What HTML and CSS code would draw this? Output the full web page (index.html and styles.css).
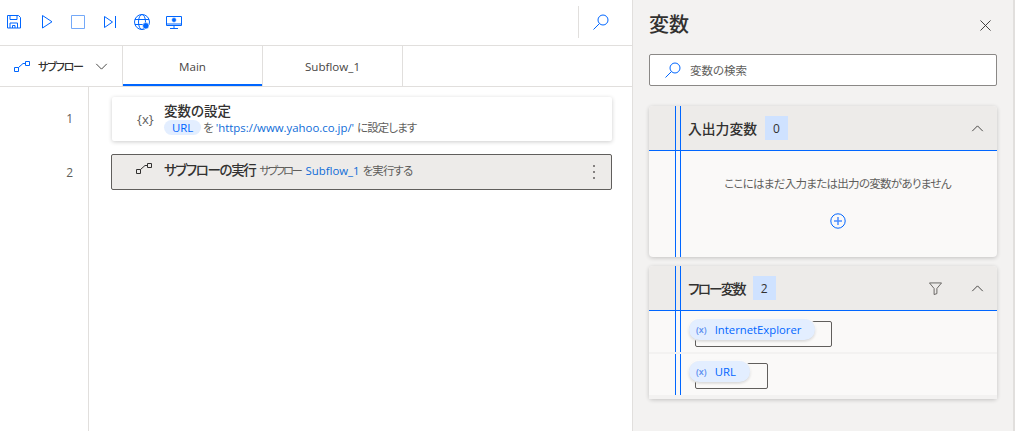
FILE: index.html
```html
<!DOCTYPE html>
<html lang="ja">
<head>
<meta charset="utf-8">
<title>変数</title>
<link rel="stylesheet" href="styles.css">
</head>
<body>
<div class="app">
  <main class="editor">
    <div class="toolbar">
      <div class="tools">
        <svg class="tool" viewBox="0 0 16 16"><path d="M.5 1.500h11l2 2v10.500H.5zM3 1.500v4h7v-4M3 14V9h7.500v5M5.500 14v-2.500h2.500V14"/></svg>
        <svg class="tool" viewBox="0 0 16 16"><path d="M3.500 1.500V14l9.500-6.250z"/></svg>
        <svg class="tool light" viewBox="0 0 16 16"><path d="M.5 1.500h13v13H.5z"/></svg>
        <svg class="tool" viewBox="0 0 16 16"><path d="M1.500 2.500v11l8-5.500zM12.500 2v12"/></svg>
        <svg class="tool globe" viewBox="0 0 16 16"><circle cx="8" cy="8" r="7.500"/><ellipse cx="8" cy="8" rx="3.500" ry="7.500"/><path d="M1 5.500h14M1 10.500h14"/><circle class="dot" cx="11.800" cy="11.800" r="3.200"/></svg>
        <svg class="tool" viewBox="0 0 16 16"><path d="M.5 2.500h15v9H.5zM8 11.500v3M4 14.500h8M.5 10h15"/><circle class="dot" cx="8" cy="6" r="2.400"/></svg>
      </div>
      <div class="toolbar-search">
        <svg class="tool" viewBox="0 0 16 16"><circle cx="10" cy="6" r="5"/><path d="M6.500 9.500L.5 15.500"/></svg>
      </div>
    </div>
    <div class="tabs">
      <div class="flow-picker">
        <svg class="flow-icon blue" viewBox="0 0 16 11"><path d="M.5 6.500h4v4h-4zM11.500.5h4v4h-4zM4.500 6.500l4.500-4h2.500"/></svg>
        <span class="flow-label">サブフロー</span>
        <svg class="chevron" viewBox="0 0 14 8"><path d="M1 1l6 6 6-6"/></svg>
      </div>
      <div class="tab active">Main</div>
      <div class="tab">Subflow_1</div>
    </div>
    <div class="canvas">
      <div class="gutter"><span class="num first">1</span><span class="num">2</span></div>
      <div class="steps">
        <div class="step">
          <span class="step-icon curly">{x}</span>
          <div class="step-body">
            <div class="step-title">変数の設定</div>
            <div class="step-desc"><span class="pill">URL</span> を <span class="link">'https://www.yahoo.co.jp/'</span> <span class="tight">に設定します</span></div>
          </div>
        </div>
        <div class="step selected">
          <svg class="flow-icon step-icon" viewBox="0 0 16 11"><path d="M.5 6.500h4v4h-4zM11.500.5h4v4h-4zM4.500 6.500l4.500-4h2.500"/></svg>
          <div class="step-line"><span class="step-title narrow">サブフローの実行</span> <span class="step-desc"><span class="kata">サブフロー</span> <span class="link">Subflow_1</span> <span class="tight">を実行する</span></span></div>
          <svg class="kebab" viewBox="0 0 4 16"><circle cx="2" cy="2" r="1"/><circle cx="2" cy="8" r="1"/><circle cx="2" cy="14" r="1"/></svg>
        </div>
      </div>
    </div>
  </main>
  <aside class="panel">
    <div class="panel-head">
      <h1>変数</h1>
      <svg class="close" viewBox="0 0 12 12"><path d="M.5.5l11 11M11.500.5l-11 11"/></svg>
    </div>
    <div class="search">
      <svg class="tool" viewBox="0 0 16 16"><circle cx="10" cy="6" r="5"/><path d="M6.500 9.500L.5 15.500"/></svg>
      <span>変数の検索</span>
    </div>
    <section class="group">
      <div class="group-head">
        <span class="group-title">入出力変数</span><span class="count">0</span>
        <svg class="chevron up" viewBox="0 0 14 8"><path d="M1 7l6-6 6 6"/></svg>
      </div>
      <div class="empty">
        <p>ここにはまだ入力または出力の変数がありません</p>
        <svg class="plus" viewBox="0 0 16 16"><circle cx="8" cy="8" r="7.200"/><path class="plus-mark" d="M8 4v8M4 8h8"/></svg>
      </div>
    </section>
    <section class="group">
      <div class="group-head">
        <span class="group-title narrow">フロー変数</span><span class="count">2</span>
        <svg class="filter" viewBox="0 0 14 14"><path d="M.5 1h13L8.500 7v5.500l-3 1V7z"/></svg>
        <svg class="chevron up" viewBox="0 0 14 8"><path d="M1 7l6-6 6 6"/></svg>
      </div>
      <div class="var-row">
        <div class="var-box ie"></div>
        <div class="var-chip"><span class="x">(x)</span>InternetExplorer</div>
      </div>
      <div class="var-row">
        <div class="var-box url"></div>
        <div class="var-chip"><span class="x">(x)</span>URL</div>
      </div>
    </section>
  </aside>
</div>
</body>
</html>
```
FILE: styles.css
```css
* { box-sizing: border-box; }
html, body { margin: 0; height: 100%; }
body {
  font-family: "Open Sans", "Noto Sans CJK JP", sans-serif;
  font-feature-settings: "palt";
  color: #323130;
  background: #fff;
  overflow: hidden;
}
.app { display: flex; width: 1015px; height: 431px; }
.editor { width: 632px; display: flex; flex-direction: column; background: #fff; }
svg { display: block; fill: none; stroke: #0066ff; stroke-width: 1; }
.toolbar { height: 46px; flex: none; display: flex; align-items: center; justify-content: space-between; border-bottom: 1px solid #e1dfdd; padding-bottom: 1px; }
.tools { display: flex; gap: 16px; padding-left: 7px; }
.tool { width: 16px; height: 16px; flex: none; }
.tool.light { stroke: #74a9f8; }
.tool.globe { margin-left: -1px; }
.dot { fill: #0066ff; stroke: #fff; stroke-width: .6; }
.toolbar-search { height: 32px; width: 54px; border-left: 1px solid #e1dfdd; display: flex; align-items: center; padding-left: 14px; margin-top: -1px; }
.tabs { height: 41px; flex: none; display: flex; border-bottom: 1px solid #e1dfdd; }
.flow-picker { width: 123px; display: flex; align-items: center; padding-left: 14px; border-right: 1px solid #e1dfdd; }
.flow-icon { width: 16px; height: 11px; flex: none; stroke: #323130; }
.flow-icon.blue { stroke: #0066ff; }
.flow-label { font-size: 11px; font-weight: 500; margin-left: 8px; width: 45px; white-space: nowrap; letter-spacing: -1.200px; }
.chevron { width: 13px; height: 7px; stroke: #323130; margin-left: 12px; flex: none; }
.tab { width: 140px; display: flex; align-items: center; justify-content: center; font-size: 11.600px; color: #484644; border-right: 1px solid #e1dfdd; }
.tab.active { box-shadow: inset 0 -2px 0 #0066ff; }
.canvas { flex: 1; display: flex; min-height: 0; }
.gutter { width: 89px; flex: none; border-right: 1px solid #e1dfdd; display: flex; flex-direction: column; align-items: flex-end; padding-right: 15px; padding-top: 23px; font-size: 12px; color: #605e5c; }
.num { height: 18px; line-height: 18px; }
.num.first { margin-bottom: 36px; }
.steps { width: 501px; margin-left: 22px; padding-top: 10px; display: flex; flex-direction: column; gap: 13px; }
.step { margin-left: 1px; height: 44px; background: #fff; border-radius: 2px; box-shadow: 0 1px 4px rgba(0,0,0,.2); display: flex; align-items: center; padding-left: 24px; }
.step-icon { width: 16px; flex: none; margin-right: 12px; }
.curly { font-size: 13px; color: #605e5c; white-space: nowrap; margin-left: 1px; margin-right: 9px; width: 18px; }
.step-body { display: flex; flex-direction: column; margin-top: -1px; }
.step-title { font-size: 13.500px; font-weight: 500; line-height: 17px; color: #323130; white-space: nowrap; }
.step-title.narrow { letter-spacing: -1.350px; }
.step-desc { font-size: 11.400px; color: #605e5c; line-height: 15px; white-space: nowrap; }
.step .link { color: #0f6cd8; margin-left: -1px; }
.tight { letter-spacing: -.800px; }
.kata { letter-spacing: -2.300px; margin-right: 3px; }
.pill { display: inline-block; background: #e3eeff; color: #0066ff; border-radius: 8px; padding: 0 8px; font-size: 11.400px; margin-right: -1px; }
.step.selected { margin-left: 0; height: 36px; background: #edebe9; border: 1px solid #605e5c; box-shadow: none; padding-left: 24px; padding-right: 15px; }
.step.selected .flow-icon { margin-top: -7px; }
.step-line { flex: 1; display: flex; align-items: center; gap: 4px; margin-top: -3px; }
.kebab { width: 4px; height: 16px; fill: #605e5c; stroke: none; flex: none; }
.panel { width: 383px; background: #f3f2f1; border-left: 1px solid #e1dfdd; border-right: 2px solid #e1dfdd; padding: 0 16px; position: relative; }
.panel-head { height: 54px; display: flex; align-items: flex-start; justify-content: space-between; padding-top: 12px; }
h1 { margin: 0; font-size: 20px; font-weight: 500; line-height: 26px; color: #323130; }
.close { width: 11px; height: 11px; stroke: #323130; margin: 8px 6px 0 0; }
.search { height: 32px; background: #fff; border: 1px solid #8a8886; border-radius: 2px; display: flex; align-items: center; padding-left: 15px; gap: 9px; font-size: 11.500px; color: #605e5c; margin-bottom: 20px; }
.group { position: relative; background: #faf9f8; border-radius: 4px; box-shadow: 0 1px 4px rgba(0,0,0,.2); margin-bottom: 9px; }
.group::before { content: ""; position: absolute; top: 0; bottom: 0; left: 26px; width: 4px; border-left: 1px solid #0066ff; border-right: 1px solid #0066ff; }
.group-head { height: 45px; background: #edebe9; border-bottom: 1px solid #0066ff; border-radius: 4px 4px 0 0; display: flex; align-items: center; padding: 0 13px 0 39px; gap: 8px; }
.group-title { font-size: 13.800px; font-weight: 500; white-space: nowrap; }
.group-title.narrow { letter-spacing: -1.900px; }
.count { width: 23px; height: 24px; background: #cfe2ff; display: flex; align-items: center; justify-content: center; font-size: 12px; }
.group-head .chevron { margin-left: auto; }
.group-head .filter { width: 13px; height: 13px; stroke: #605e5c; margin-left: auto; margin-right: 8px; }
.group-head .filter + .chevron { margin-left: 13px; }
.empty { height: 106px; display: flex; flex-direction: column; align-items: center; padding: 25px 0 0 29px; }
.empty p { margin: 0; font-size: 11.500px; color: #605e5c; line-height: 16px; letter-spacing: -.700px; }
.plus { width: 16px; height: 16px; margin-top: 21px; }
.plus-mark { stroke: #4a8dff; stroke-width: 1.500; }
.var-row { height: 43px; position: relative; padding: 8px 0 0 39px; border-bottom: 2px solid #f3f2f1; }
.var-row:last-child { height: 45px; padding-top: 7px; border-bottom-width: 4px; }
.var-box { position: absolute; left: 46px; top: 10px; height: 26px; border: 1px solid #605e5c; border-radius: 2px; }
.var-row:last-child .var-box { top: 9px; }
.var-box.ie { width: 137px; }
.var-box.url { width: 73px; }
.var-chip { position: relative; display: flex; width: fit-content; align-items: center; height: 21px; margin-left: 1px; background: #e3eeff; color: #0066ff; border-radius: 11px; padding: 0 14px 0 7px; font-size: 11.300px; box-shadow: 0 1px 3px rgba(0,0,0,.2), 0 0 0 1px #fff; }
.x { font-size: 9px; font-weight: 600; margin-right: 8px; color: #5b8ff0; }
```
